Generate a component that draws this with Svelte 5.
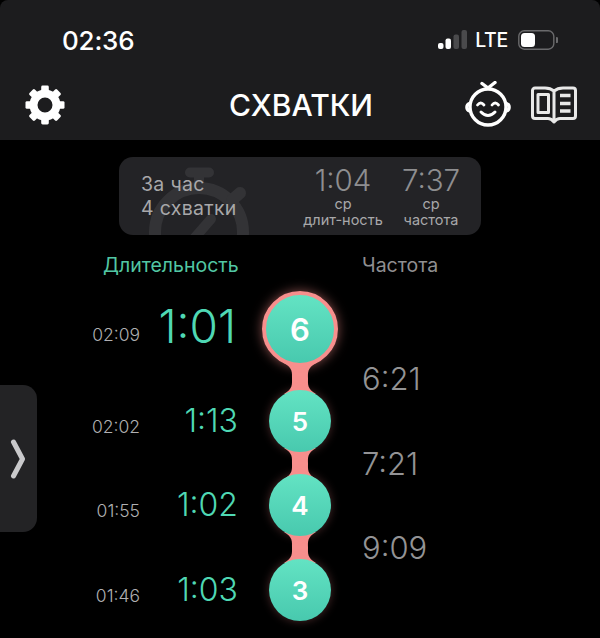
<script>
  const rows = [
    { time: "02:09", dur: "1:01", num: 6, freq: "6:21", active: true },
    { time: "02:02", dur: "1:13", num: 5, freq: "7:21" },
    { time: "01:55", dur: "1:02", num: 4, freq: "9:09" },
    { time: "01:46", dur: "1:03", num: 3 },
  ];
  const teeth = [0, 45, 90, 135, 180, 225, 270, 315];
</script>

<div class="screen">
  <header class="top">
    <div class="status">
      <span class="clock">02:36</span>
      <div class="status-right">
        <svg class="signal" width="29" height="20" viewBox="0 0 29 20">
          <rect x="0" y="13" width="5.5" height="6" rx="2" fill="#fff" />
          <rect x="7.5" y="8.5" width="5.5" height="10.5" rx="2" fill="#fff" />
          <rect x="15.5" y="4.5" width="5.5" height="14.5" rx="2" fill="#4a4a4c" />
          <rect x="23.5" y="0" width="5.5" height="19" rx="2" fill="#4a4a4c" />
        </svg>
        <span class="lte">LTE</span>
        <svg class="battery" width="40" height="20" viewBox="0 0 40 20">
          <rect x="0.8" y="0.8" width="35" height="18.4" rx="5.5" fill="none" stroke="#6a6a6c" stroke-width="1.4" />
          <rect x="3" y="3" width="14" height="14" rx="3.5" fill="#fff" />
          <path d="M38 7 a3 3 0 0 1 0 6z" fill="#6a6a6c" />
        </svg>
      </div>
    </div>
    <nav class="bar">
      <svg class="gear" width="40" height="40" viewBox="0 0 40 40">
        <circle cx="20" cy="20" r="11.5" fill="none" stroke="#fff" stroke-width="8" />
        {#each teeth as deg}
          <rect x="16.2" y="0.5" width="7.6" height="7" rx="1.4" fill="#fff" transform="rotate({deg} 20 20)" />
        {/each}
      </svg>
      <h1>СХВАТКИ</h1>
      <div class="bar-icons">
        <svg width="46" height="48" viewBox="1 0 46 48" fill="none" stroke="#fff" stroke-width="3.4" stroke-linecap="round">
          <circle cx="24" cy="26" r="18" />
          <path d="M24 7 L18 2.5 M24 7 L31 1.5" />
          <path d="M5.5 22.5 a4 4 0 0 0 0 7.5 M42.5 22.5 a4 4 0 0 1 0 7.5" />
          <path d="M13.5 24 q3.2 -4 6.5 0 M28 24 q3.2 -4 6.5 0" stroke-width="2.8" />
          <path d="M17 31 q7 7 14 0" stroke-width="3" />
        </svg>
        <svg width="48" height="40" viewBox="0 0 48 40" fill="none" stroke="#e8e8e8" stroke-width="3" stroke-linejoin="round" stroke-linecap="round">
          <path d="M24 6 C21 3.5 18 3 15 3 H5 a2.5 2.5 0 0 0 -2.5 2.5 V31 a2.5 2.5 0 0 0 2.5 2.5 H18 C20 33.5 22 34.5 24 37 C26 34.5 28 33.5 30 33.5 H43 a2.5 2.5 0 0 0 2.5 -2.5 V5.5 a2.5 2.5 0 0 0 -2.5 -2.5 H33 C30 3 27 3.5 24 6 Z M24 6 V37" />
          <rect x="8" y="9.5" width="10.5" height="18" />
          <path d="M30 10.5 H40.5 M30 18.5 H40.5 M30 26 H40.5" stroke-width="3.6" stroke-linecap="butt" />
        </svg>
      </div>
    </nav>
  </header>

  <section class="summary">
    <svg class="watermark" width="140" height="78" viewBox="0 0 140 78" fill="none" stroke="#333336" stroke-width="12" stroke-linecap="round">
      <circle cx="80" cy="75" r="44" />
      <path d="M71 15.5 H90" stroke-width="10" />
      <path d="M80 16 V30" stroke-width="10" stroke-linecap="butt" />
      <path d="M113 43 L121 36" />
      <path d="M72 85 L92 62" stroke-width="10" />
    </svg>
    <div class="summary-left">
      <div>За час</div>
      <div>4 схватки</div>
    </div>
    <div class="stat stat-dur">
      <strong>1:04</strong>
      <span>ср</span>
      <span>длит-ность</span>
    </div>
    <div class="stat stat-freq">
      <strong>7:37</strong>
      <span>ср</span>
      <span>частота</span>
    </div>
  </section>

  <div class="heads">
    <span class="head-dur">Длительность</span>
    <span class="head-freq">Частота</span>
  </div>

  <div class="timeline">
    {#each rows as row}
      <span class="time">{row.time}</span>
      <span class="dur" class:big={row.active}>{row.dur}</span>
      <div class="node" class:active={row.active}>{row.num}</div>
      <span></span>
      {#if row.freq}
        <span></span>
        <span></span>
        <svg class="link" width="40" height="31" viewBox="0 0 40 31">
          <path d="M4 0 C13 5 12 10 12 15.5 C12 21 13 26 4 31 H36 C27 26 28 21 28 15.5 C28 10 27 5 36 0Z" fill="#f78f8d" />
        </svg>
        <span class="freq">{row.freq}</span>
      {/if}
    {/each}
  </div>

  <aside class="handle">
    <svg width="16" height="40" viewBox="0 0 16 40" fill="none">
      <path d="M3.5 3 L12.5 20 L3.5 37" stroke="#c9c9cb" stroke-width="5" stroke-linecap="round" stroke-linejoin="round" />
    </svg>
  </aside>
</div>

<style>
  :global(body) {
    background: #000;
  }

  .screen {
    position: relative;
    width: 600px;
    height: 638px;
    overflow: hidden;
    background: #000;
    color: #fff;
    font-family: Inter, "Noto Sans", sans-serif;
  }

  .top {
    height: 140px;
    background: #1c1c1e;
    border-top-left-radius: 8px;
    border-top-right-radius: 8px;
    box-sizing: border-box;
    padding: 0 22px 0 25px;
  }

  .status {
    display: flex;
    justify-content: space-between;
    align-items: center;
    height: 80px;
    padding: 0 20px 0 37px;
  }

  .clock {
    font-size: 26px;
    font-weight: 500;
    letter-spacing: -0.2px;
  }

  .status-right {
    display: flex;
    align-items: center;
  }

  .signal {
    margin-right: 8px;
  }

  .lte {
    font-size: 19.5px;
    font-weight: 500;
    letter-spacing: -0.3px;
    margin-right: 10px;
  }

  .bar {
    display: flex;
    align-items: center;
    justify-content: space-between;
    height: 50px;
    position: relative;
  }

  h1 {
    position: absolute;
    left: 204px;
    margin: 0;
    font-size: 30px;
    font-weight: 500;
    line-height: 50px;
  }

  .bar-icons {
    display: flex;
    align-items: center;
    gap: 19px;
    margin-left: auto;
  }

  .gear {
    flex: none;
  }

  .summary {
    position: relative;
    display: flex;
    align-items: center;
    width: 362px;
    height: 78px;
    box-sizing: border-box;
    margin: 17px 0 0 119px;
    padding: 0 22px;
    background: #232326;
    border-radius: 14px;
    overflow: hidden;
  }

  .watermark {
    position: absolute;
    left: 0;
    top: 0;
  }

  .summary-left {
    position: relative;
    flex: 1;
    color: #a8a8aa;
    font-size: 19.5px;
    letter-spacing: 0.3px;
    line-height: 24px;
  }

  .stat {
    position: relative;
    display: flex;
    flex-direction: column;
    align-items: center;
    color: #a8a8aa;
    font-size: 14.5px;
    line-height: 16px;
  }

  .stat strong {
    color: #8e8e90;
    font-size: 29.5px;
    font-weight: 300;
    line-height: 31px;
  }

  .stat-dur {
    width: 80px;
    margin-right: 20px;
  }

  .stat-freq {
    width: 56px;
  }

  .heads {
    display: flex;
    font-size: 19.5px;
    line-height: 24px;
    margin-top: 18px;
  }

  .head-dur {
    width: 362px;
    box-sizing: border-box;
    padding-left: 103px;
    color: #52c7a4;
  }

  .head-freq {
    color: #8f8f91;
  }

  .timeline {
    display: grid;
    grid-template-columns: 140px 98px 124px auto;
    grid-template-rows: 76px 23px 62px 22px 62px 23px 62px;
    align-items: center;
    margin-top: 14px;
  }

  .time {
    padding-top: 10px;
    text-align: right;
    color: #b0b0b2;
    font-size: 17.5px;
    font-weight: 300;
  }

  .dur {
    padding-bottom: 2px;
    text-align: right;
    color: #4fd8b4;
    font-size: 32px;
    font-weight: 300;
  }

  .dur.big {
    padding: 0 2px 6px 0;
    font-size: 46px;
  }

  .node {
    position: relative;
    z-index: 1;
    justify-self: center;
    display: flex;
    align-items: center;
    justify-content: center;
    width: 62px;
    height: 62px;
    border-radius: 50%;
    background: linear-gradient(#63e3c3, #48c9ae);
    box-shadow: 0 0 10px rgba(247, 143, 141, 0.3);
    font-size: 26px;
    font-weight: 600;
  }

  .node.active {
    width: 68px;
    height: 68px;
    border: 4px solid #f78f8d;
    font-size: 31px;
    box-shadow: 0 0 12px rgba(247, 143, 141, 0.55);
  }

  .link {
    justify-self: center;
    margin: -4px 0;
  }

  .freq {
    color: #939395;
    font-size: 31px;
    font-weight: 300;
    line-height: 23px;
  }

  .handle {
    position: absolute;
    left: 0;
    top: 385px;
    width: 37px;
    height: 147px;
    display: flex;
    align-items: center;
    box-sizing: border-box;
    padding-left: 10px;
    background: #232325;
    border-radius: 0 14px 14px 0;
  }
</style>
